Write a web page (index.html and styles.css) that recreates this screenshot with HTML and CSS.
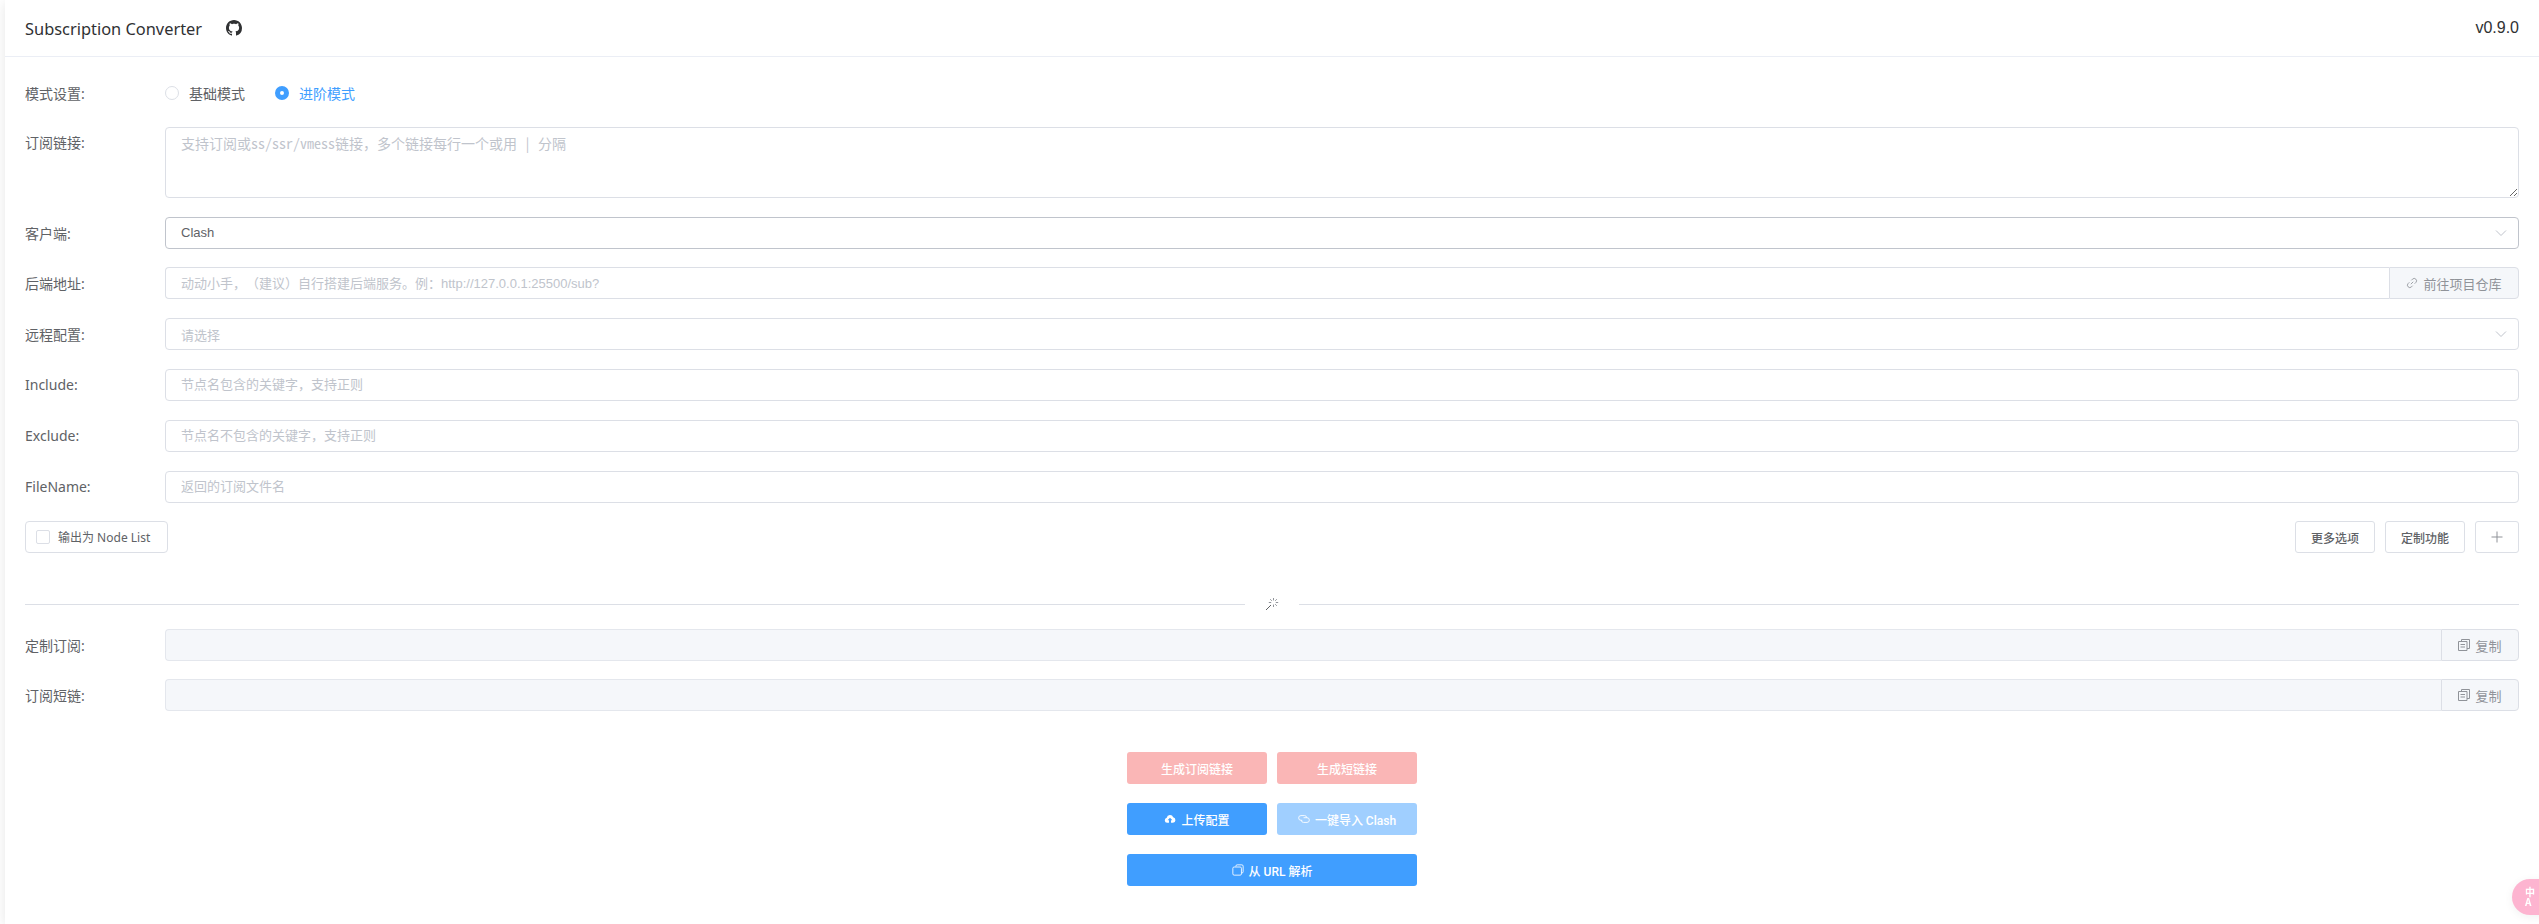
FILE: index.html
```html
<!DOCTYPE html>
<html lang="zh-CN">
<head>
<meta charset="utf-8">
<title>Subscription Converter</title>
<link rel="stylesheet" href="styles.css">
</head>
<body>
<div class="card">
  <header class="card-head">
    <div class="brand">
      <span class="title">Subscription Converter</span>
      <svg class="gh" viewBox="0 0 16 16"><path d="M8 0C3.58 0 0 3.58 0 8c0 3.54 2.29 6.53 5.47 7.59.4.07.55-.17.55-.38 0-.19-.01-.82-.01-1.49-2.01.37-2.53-.49-2.69-.94-.09-.23-.48-.94-.82-1.13-.28-.15-.68-.52-.01-.53.63-.01 1.08.58 1.23.82.72 1.21 1.87.87 2.33.66.07-.52.28-.87.51-1.07-1.78-.2-3.64-.89-3.64-3.95 0-.87.31-1.59.82-2.15-.08-.2-.36-1.02.08-2.12 0 0 .67-.21 2.2.82.64-.18 1.32-.27 2-.27s1.36.09 2 .27c1.53-1.04 2.2-.82 2.2-.82.44 1.1.16 1.92.08 2.12.51.56.82 1.27.82 2.15 0 3.07-1.87 3.75-3.65 3.95.29.25.54.73.54 1.48 0 1.07-.01 1.93-.01 2.2 0 .21.15.46.55.38A8.01 8.01 0 0 0 16 8c0-4.42-3.58-8-8-8z"/></svg>
    </div>
    <span class="version">v0.9.0</span>
  </header>
  <main class="card-body">
    <div class="row row-mode">
      <label class="lab">模式设置:</label>
      <div class="radios">
        <span class="radio"><i class="dot"></i>基础模式</span>
        <span class="radio on"><i class="dot"></i>进阶模式</span>
      </div>
    </div>
    <div class="row row-area">
      <label class="lab lab-top">订阅链接:</label>
      <textarea class="area" placeholder="支持订阅或ss/ssr/vmess链接&#xFF0C;多个链接每行一个或用 | 分隔"></textarea>
    </div>
    <div class="row">
      <label class="lab">客户端:</label>
      <div class="box box-strong"><span class="val">Clash</span><svg class="chev" viewBox="0 0 12 12"><path d="M1 3.500l5 5 5-5"/></svg></div>
    </div>
    <div class="row">
      <label class="lab">后端地址:</label>
      <div class="group">
        <input class="inp inp-l" placeholder="动动小手&#xFF0C;&#xFF08;建议&#xFF09;自行搭建后端服务。例&#xFF1A;http://127.0.0.1:25500/sub?">
        <span class="append append-wide"><svg class="ico" viewBox="0 0 14 14"><path d="M5.600 8.400l2.800-2.800M6.200 3.900l1.400-1.400a2.600 2.600 0 0 1 3.900 3.900l-1.400 1.400M7.800 10.100l-1.400 1.400a2.600 2.600 0 0 1-3.900-3.900l1.400-1.400"/></svg>前往项目仓库</span>
      </div>
    </div>
    <div class="row">
      <label class="lab">远程配置:</label>
      <div class="box"><span class="ph">请选择</span><svg class="chev" viewBox="0 0 12 12"><path d="M1 3.500l5 5 5-5"/></svg></div>
    </div>
    <div class="row">
      <label class="lab">Include:</label>
      <input class="inp" placeholder="节点名包含的关键字&#xFF0C;支持正则">
    </div>
    <div class="row">
      <label class="lab">Exclude:</label>
      <input class="inp" placeholder="节点名不包含的关键字&#xFF0C;支持正则">
    </div>
    <div class="row">
      <label class="lab">FileName:</label>
      <input class="inp" placeholder="返回的订阅文件名">
    </div>
    <div class="row row-tools">
      <span class="check"><i class="tick"></i>输出为 Node List</span>
      <div class="tools">
        <button class="btn">更多选项</button>
        <button class="btn">定制功能</button>
        <button class="btn btn-plus"><svg class="ico plus" viewBox="0 0 12 12"><path d="M6 .5v11M.5 6h11"/></svg></button>
      </div>
    </div>
    <div class="divider">
      <span class="divider-ico"><svg viewBox="0 0 14 14"><path class="wand" d="M1 13l5-5"/><path class="spark" d="M8.500 1v2.400M8.500 7.600V10M3.800 5.500h2.400M10.800 5.500h2.400M5.200 2.200l1.600 1.600M10.200 7.200l1.600 1.600M11.800 2.200l-1.600 1.600"/></svg></span>
    </div>
    <div class="row row-out">
      <label class="lab">定制订阅:</label>
      <div class="group">
        <input class="inp inp-l inp-off" disabled>
        <span class="append append-copy"><svg class="ico" viewBox="0 0 12 12"><path d="M3.500 2.500V.5h8v9h-2.500M.5 2.500h8.500v9H.5zM2.500 5.500h4.500M2.500 8h4.500"/></svg>复制</span>
      </div>
    </div>
    <div class="row row-out">
      <label class="lab">订阅短链:</label>
      <div class="group">
        <input class="inp inp-l inp-off" disabled>
        <span class="append append-copy"><svg class="ico" viewBox="0 0 12 12"><path d="M3.500 2.500V.5h8v9h-2.500M.5 2.500h8.500v9H.5zM2.500 5.500h4.500M2.500 8h4.500"/></svg>复制</span>
      </div>
    </div>
    <div class="actions">
      <div class="act-row">
        <button class="act act-red">生成订阅链接</button>
        <button class="act act-red">生成短链接</button>
      </div>
      <div class="act-row">
        <button class="act act-blue"><svg class="aico fill" viewBox="0 0 14 14"><path d="M3.600 11.500A3 3 0 0 1 3.200 5.600 3.900 3.900 0 0 1 10.700 5a3.300 3.300 0 0 1-.2 6.500H8.200V8.600h1.600L7 5.600 4.200 8.600h1.600v2.900z"/></svg>上传配置</button>
        <button class="act act-light"><svg class="aico" viewBox="0 0 14 14"><path d="M5 8.500H3.500a2.750 2.750 0 0 1 0-5.500h4a2.750 2.750 0 0 1 2.700 2.500M6.500 5.500h4a2.750 2.750 0 0 1 0 5.500h-4a2.750 2.750 0 0 1-2.700-2.500"/></svg>一键导入 Clash</button>
      </div>
      <div class="act-row">
        <button class="act act-blue act-full"><svg class="aico" viewBox="0 0 14 14"><path d="M4.500 3V2.500A1.500 1.500 0 0 1 6 1h5.500A1.500 1.500 0 0 1 13 2.500v6.500a1.500 1.500 0 0 1-1.500 1.500H11M2.500 3.500h7A1.500 1.500 0 0 1 11 5v6.500A1.500 1.500 0 0 1 9.500 13h-7A1.500 1.500 0 0 1 1 11.500V5a1.500 1.500 0 0 1 1.500-1.500z"/></svg>从 URL 解析</button>
      </div>
    </div>
  </main>
</div>
<div class="translate"><span>中</span><span>A</span></div>
</body>
</html>
```
FILE: styles.css
```css
* { box-sizing: border-box; }
html, body { margin: 0; height: 100%; overflow: hidden; }
body {
  padding-left: 5px;
  background: #fff;
  font-family: "Liberation Sans", "Noto Sans CJK SC", sans-serif;
  color: #606266;
  font-size: 14px;
}
.card {
  height: 100%;
  background: #fff;
  box-shadow: 0 2px 12px rgba(0, 0, 0, .1);
}
.card-head {
  height: 57px;
  padding: 0 20px;
  display: flex;
  align-items: center;
  justify-content: space-between;
  border-bottom: 1px solid #ebeef5;
  color: #303133;
}
.brand { display: flex; align-items: center; }
.title { font: 16.4px "Noto Sans", "Noto Sans CJK SC", sans-serif; width: 201px; }
.gh { width: 16px; height: 16px; fill: #303133; }
.version { font-size: 16px; }
.card-body { padding: 20px 20px 0; }
.row { display: flex; align-items: center; height: 32px; margin-bottom: 18.8px; }
.row-mode { margin-bottom: 18px; }
.row-area { height: 71px; margin-bottom: 18.6px; align-items: flex-start; }
.row-tools { justify-content: space-between; margin-bottom: 0; }
.row-out { margin-bottom: 18px; }
.lab { flex: 0 0 140px; font-family: "Noto Sans", "Noto Sans CJK SC", sans-serif; font-size: 14px; }
.lab-top { line-height: 32px; }
.radios { display: flex; }
.radio { display: flex; align-items: center; margin-right: 30px; }
.dot {
  width: 14px; height: 14px; margin-right: 10px;
  border: 1px solid #dcdfe6; border-radius: 50%; background: #fff;
}
.radio.on { color: #409eff; }
.radio.on .dot { border: 5px solid #409eff; }
.area, .inp, .box {
  flex: 1;
  min-width: 0;
  border: 1px solid #dcdfe6;
  border-radius: 4px;
  background: #fff;
  color: #606266;
  outline: none;
  text-spacing-trim: space-all;
}
.area {
  height: 71px;
  padding: 5px 15px;
  font: 14px/1.5 "Noto Sans Mono CJK SC", "Liberation Mono", "Noto Sans CJK SC", monospace;
  resize: vertical;
}
.inp, .box { height: 32px; font: 13px "Liberation Sans", "Noto Sans CJK SC", sans-serif; padding: 0 15px; }
::placeholder { color: #c0c4cc; opacity: 1; }
.box { display: flex; align-items: center; justify-content: space-between; padding-right: 11px; }
.box-strong { border-color: #c0c4cc; }
.ph { color: #c0c4cc; }
.chev { width: 12px; height: 12px; fill: none; stroke: #c0c4cc; stroke-width: 1; }
.group { flex: 1; display: flex; min-width: 0; }
.inp-l { border-radius: 4px 0 0 4px; border-right: 0; }
.inp-off { background: #f5f7fa; border-color: #e4e7ed; }
.append {
  flex: none;
  height: 32px;
  display: flex; align-items: center; justify-content: center;
  background: #f5f7fa;
  border: 1px solid #dcdfe6;
  border-radius: 0 4px 4px 0;
  color: #909399;
  font-size: 13px;
}
.append-wide { width: 130px; }
.append-copy { width: 78px; }
.ico { width: 12px; height: 12px; margin-right: 5px; fill: none; stroke: #909399; stroke-width: 1; }
.check {
  width: 143px; height: 32px;
  display: flex; align-items: center;
  padding-left: 10px;
  border: 1px solid #dcdfe6; border-radius: 4px;
  font-family: "Noto Sans", "Noto Sans CJK SC", sans-serif;
  font-size: 12px;
}
.tick { width: 14px; height: 14px; margin-right: 8px; border: 1px solid #dcdfe6; border-radius: 2px; }
.tools { display: flex; gap: 10px; }
.btn {
  width: 80px; height: 32px;
  padding: 0;
  border: 1px solid #dcdfe6; border-radius: 3px;
  background: #fff; color: #606266;
  font: 500 12px "Liberation Sans", "Noto Sans CJK SC", sans-serif;
}
.btn-plus { width: 44px; display: flex; align-items: center; justify-content: center; }
.plus { margin: 0; }
.divider { height: 1px; margin: 51px 0 24px; background: #dcdfe6; position: relative; display: flex; justify-content: center; }
.divider-ico {
  position: absolute; top: -7px;
  width: 54px; height: 14px;
  background: #fff;
  display: flex; justify-content: center;
}
.divider-ico svg { width: 14px; height: 14px; fill: none; stroke-width: 1; }
.wand { stroke: #606266; }
.spark { stroke: #909399; }
.actions { display: flex; flex-direction: column; align-items: center; gap: 19px; margin-top: 41px; }
.act-row { display: flex; gap: 10px; }
.act {
  width: 140px; height: 32px;
  display: flex; align-items: center; justify-content: center;
  padding: 0; border: 0; border-radius: 3px;
  color: #fff;
  font: 500 12px Roboto, "Noto Sans CJK SC", sans-serif;
}
.act-full { width: 290px; }
.act-red { background: #fab6b6; }
.act-blue { background: #409eff; }
.act-light { background: #a0cfff; }
.aico { width: 12px; height: 12px; margin-right: 5px; fill: none; stroke: #fff; stroke-width: 1; }
.aico.fill { fill: #fff; stroke: none; }
.translate {
  position: fixed;
  left: 2512px; top: 879px;
  width: 60px; height: 36px;
  padding: 8px 0 0 13px;
  border-radius: 18px;
  background: #fdb4d0;
  box-shadow: 0 2px 10px rgba(0, 0, 0, .06);
  color: #fff;
  font: bold 10px/10px "Noto Sans CJK SC", sans-serif;
  display: flex; flex-direction: column;
}
```
